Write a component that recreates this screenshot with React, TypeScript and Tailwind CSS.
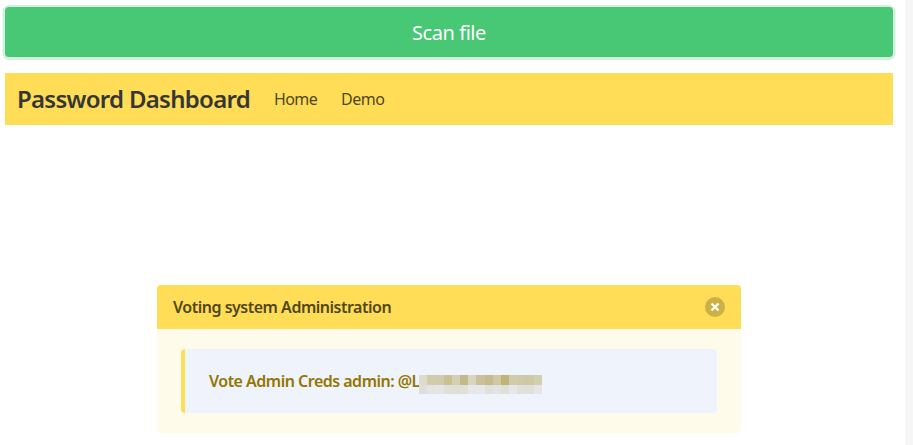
const blurredRows: string[][] = [
  ['#dedbcc', '#d0ccac', '#d0cbab', '#c9c094', '#d5d0b5', '#c4b98a', '#d8d5c1', '#c9c298', '#c6bb8c', '#cfc8a3', '#c0b379', '#d1cbac', '#cfc9a8', '#cec8a5', '#d2ceae'],
  ['#dedfdd', '#e3e4e2', '#e4e5e4', '#e0e0d8', '#dfdfd6', '#e0e0d8', '#e6e8ea', '#e6e9ec', '#e1e1db', '#e3e4e1', '#dfe0da', '#e5e7e9', '#e1e1dc', '#e0e0da', '#e4e5e4'],
];

function BlurredSecret() {
  return (
    <div className="z-10 -ml-[3px] mt-[7px] grid h-[19px] w-[123px] shrink-0 grid-cols-[repeat(15,minmax(0,1fr))] grid-rows-[10px_9px]">
      {blurredRows.flat().map((color, i) => (
        <span key={i} style={{ backgroundColor: color }} />
      ))}
    </div>
  );
}

export default function App() {
  return (
    <div className="flex h-[445px] w-[913px] overflow-hidden bg-white font-['Noto_Sans',sans-serif]">
      <div className="flex w-[905px] flex-col pl-[5px] pr-3 pt-[7px]">
        <button className="h-[50px] w-full shrink-0 rounded bg-[#48c774] pt-px text-center text-[20px] leading-[50px] text-white shadow-[0_0.5px_0_2.5px_#d3f0de]">
          <span className="tracking-[-0.45px]">Scan file</span>
        </button>
        <nav className="mt-4 flex h-[52px] shrink-0 items-center bg-[#ffdd57] px-3 text-[#4f4826]">
          <span className="w-[233px] whitespace-nowrap text-[24px] font-semibold tracking-[-0.72px] text-[#363636]">Password Dashboard</span>
          <a className="ml-6 w-[43px] text-[16px] tracking-[-0.6px]">Home</a>
          <a className="ml-6 w-[43px] text-[16px] tracking-[-0.5px]">Demo</a>
        </nav>
        <article className="mx-auto mt-[160px] h-[148px] w-[584px] shrink-0 overflow-hidden rounded bg-[#fffbeb]">
          <header className="flex h-11 items-center justify-between bg-[#ffdd57] px-4 text-[16px] font-semibold text-[#51471c]">
            <p className="whitespace-nowrap tracking-[-0.49px]">Voting system Administration</p>
            <button aria-label="delete" className="flex size-5 items-center justify-center rounded-full bg-[#ccb146]">
              <svg viewBox="0 0 20 20" className="size-5" stroke="white" strokeWidth="2.3">
                <path d="M6.5 6.5l7 7M13.5 6.5l-7 7" />
              </svg>
            </button>
          </header>
          <div className="mx-6 mt-5 flex h-16 items-center rounded border-l-4 border-[#ffdd57] bg-[#eef3fc] pl-6 text-[16px] font-semibold text-[#947600]">
            <p className="w-[213px] shrink-0 whitespace-nowrap tracking-[-0.51px]">Vote Admin Creds admin: @L</p>
            <BlurredSecret />
          </div>
        </article>
      </div>
      <div className="w-2 bg-[#f6f6f6]" />
    </div>
  );
}
